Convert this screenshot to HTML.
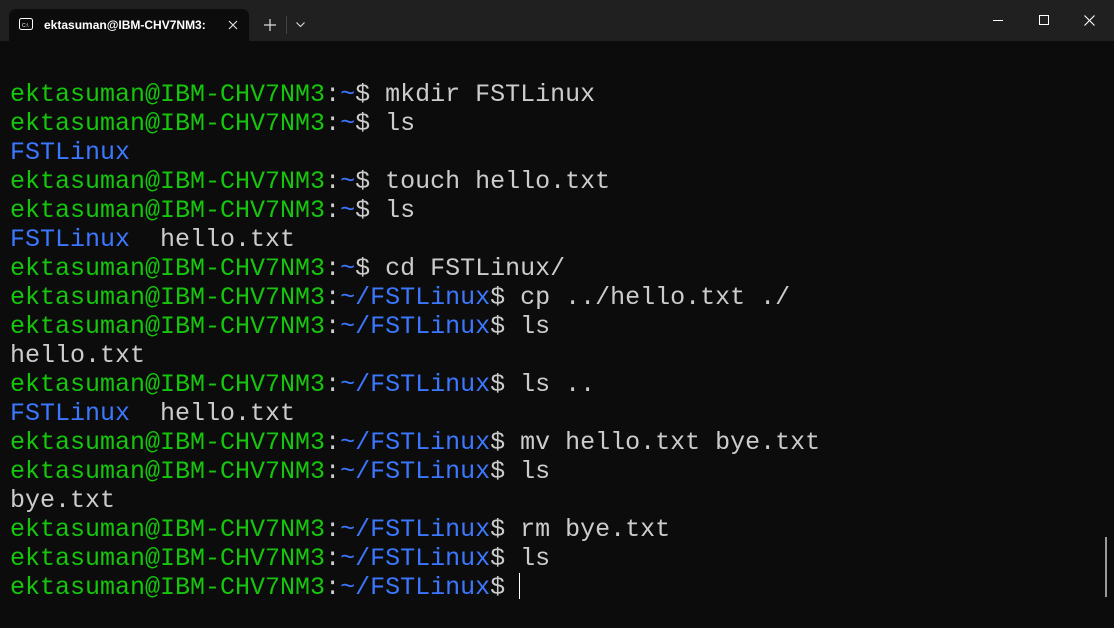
<!DOCTYPE html>
<html><head><style>
html,body{margin:0;padding:0;width:1114px;height:628px;overflow:hidden;background:#0c0c0c;}
.title{position:absolute;left:0;top:0;width:1114px;height:41px;background:#202020;}
.tab{position:absolute;left:9px;top:9px;width:240px;height:32px;background:#0c0c0c;border-radius:7px 7px 0 0;}
.tab .t{position:absolute;left:35px;top:9px;font:600 12px "Liberation Sans",sans-serif;color:#fff;}
.term{position:absolute;left:10px;top:80px;font:25px/29px "Liberation Mono",monospace;color:#cccccc;white-space:pre;}
.g{color:#16c60c}.b{color:#3b78ff}
</style></head><body>
<div class="title">
 <div class="tab">
  <svg style="position:absolute;left:10px;top:9px" width="14" height="12" viewBox="0 0 14 12"><rect x="0.5" y="0.5" width="13" height="11" rx="2" fill="none" stroke="#fff"/><text x="3" y="9" font-size="5" fill="#fff" font-family="Liberation Sans">C:\</text></svg>
  <div class="t">ektasuman@IBM-CHV7NM3:</div>
  <svg style="position:absolute;left:219px;top:11px" width="10" height="10"><path d="M1 1L9 9M9 1L1 9" stroke="#ddd" stroke-width="1.2"/></svg>
 </div>
 <svg style="position:absolute;left:264px;top:19px" width="12" height="12"><path d="M6 0V12M0 6H12" stroke="#ddd" stroke-width="1.2"/></svg>
 <div style="position:absolute;left:286px;top:16px;width:1px;height:18px;background:#444"></div>
 <svg style="position:absolute;left:296px;top:22px" width="9" height="6"><path d="M0.5 0.5L4.5 4.5L8.5 0.5" stroke="#ddd" fill="none" stroke-width="1.1"/></svg>
 <div style="position:absolute;left:993px;top:20px;width:10px;height:1px;background:#fff"></div>
 <div style="position:absolute;left:1039px;top:15px;width:8px;height:8px;border:1px solid #fff"></div>
 <svg style="position:absolute;left:1084px;top:15px" width="11" height="11"><path d="M0.5 0.5L10.5 10.5M10.5 0.5L0.5 10.5" stroke="#fff" stroke-width="1.1"/></svg>
</div>
<div class="term"><span class="g">ektasuman@IBM-CHV7NM3</span>:<span class="b">~</span>$ mkdir FSTLinux
<span class="g">ektasuman@IBM-CHV7NM3</span>:<span class="b">~</span>$ ls
<span class="b">FSTLinux</span>
<span class="g">ektasuman@IBM-CHV7NM3</span>:<span class="b">~</span>$ touch hello.txt
<span class="g">ektasuman@IBM-CHV7NM3</span>:<span class="b">~</span>$ ls
<span class="b">FSTLinux</span>  hello.txt
<span class="g">ektasuman@IBM-CHV7NM3</span>:<span class="b">~</span>$ cd FSTLinux/
<span class="g">ektasuman@IBM-CHV7NM3</span>:<span class="b">~/FSTLinux</span>$ cp ../hello.txt ./
<span class="g">ektasuman@IBM-CHV7NM3</span>:<span class="b">~/FSTLinux</span>$ ls
hello.txt
<span class="g">ektasuman@IBM-CHV7NM3</span>:<span class="b">~/FSTLinux</span>$ ls ..
<span class="b">FSTLinux</span>  hello.txt
<span class="g">ektasuman@IBM-CHV7NM3</span>:<span class="b">~/FSTLinux</span>$ mv hello.txt bye.txt
<span class="g">ektasuman@IBM-CHV7NM3</span>:<span class="b">~/FSTLinux</span>$ ls
bye.txt
<span class="g">ektasuman@IBM-CHV7NM3</span>:<span class="b">~/FSTLinux</span>$ rm bye.txt
<span class="g">ektasuman@IBM-CHV7NM3</span>:<span class="b">~/FSTLinux</span>$ ls
<span class="g">ektasuman@IBM-CHV7NM3</span>:<span class="b">~/FSTLinux</span>$ </div>
<div style="position:absolute;left:519px;top:573px;width:1px;height:26px;background:#fff"></div>
<div style="position:absolute;left:1105px;top:537px;width:2px;height:60px;background:#9a9a9a"></div>
</body></html>
